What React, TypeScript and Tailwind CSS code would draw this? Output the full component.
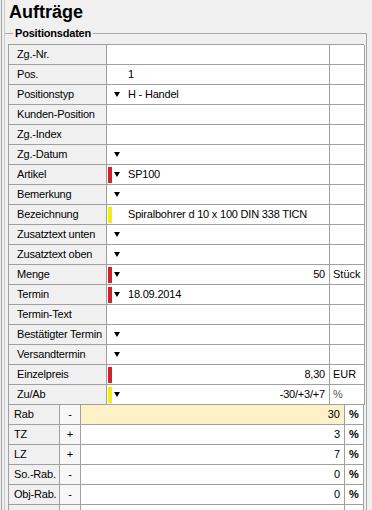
import React from "react";

type Row = {
  label: string;
  mark?: "red" | "yellow";
  arrow?: boolean;
  value?: string;
  num?: string;
  unit?: string;
};

const ROWS: Row[] = [
  { label: "Zg.-Nr." },
  { label: "Pos.", value: "1" },
  { label: "Positionstyp", arrow: true, value: "H - Handel" },
  { label: "Kunden-Position" },
  { label: "Zg.-Index" },
  { label: "Zg.-Datum", arrow: true },
  { label: "Artikel", mark: "red", arrow: true, value: "SP100" },
  { label: "Bemerkung", arrow: true },
  { label: "Bezeichnung", mark: "yellow", value: "Spiralbohrer d 10 x 100 DIN 338 TICN" },
  { label: "Zusatztext unten", arrow: true },
  { label: "Zusatztext oben", arrow: true },
  { label: "Menge", mark: "red", arrow: true, num: "50", unit: "Stück" },
  { label: "Termin", mark: "red", arrow: true, value: "18.09.2014" },
  { label: "Termin-Text" },
  { label: "Bestätigter Termin", arrow: true },
  { label: "Versandtermin", arrow: true },
  { label: "Einzelpreis", mark: "red", num: "8,30", unit: "EUR" },
  { label: "Zu/Ab", mark: "yellow", arrow: true, num: "-30/+3/+7", unit: "%" },
];

const DISCOUNTS = [
  { label: "Rab", sign: "-", value: "30", active: true },
  { label: "TZ", sign: "+", value: "3" },
  { label: "LZ", sign: "+", value: "7" },
  { label: "So.-Rab.", sign: "-", value: "0" },
  { label: "Obj-Rab.", sign: "-", value: "0" },
];

const Arrow = () => (
  <svg width="6" height="5" viewBox="0 0 6 5" className="block">
    <polygon points="0,0 6,0 3,5" fill="#000" />
  </svg>
);

const GridRow = ({ row }: { row: Row }) => (
  <div className="flex h-[20px]">
    <div className="w-[98px] shrink-0 border-r border-b border-[#a0a0a0] bg-[#f0f0f0] pl-[8px] flex items-center tracking-[-0.2px]">
      {row.label}
    </div>
    <div className="w-[223px] shrink-0 border-r border-b border-[#a0a0a0] bg-white flex items-center">
      <div className="w-[6px] shrink-0 pl-[1px] flex items-center">
        {row.mark && (
          <div
            className={
              row.mark === "red"
                ? "w-[4px] h-[16px] bg-[#d3202b]"
                : "w-[4px] h-[16px] bg-[#f3ee12]"
            }
          />
        )}
      </div>
      <div className="w-[15px] shrink-0 flex items-center pl-[1px]">{row.arrow && <Arrow />}</div>
      {row.value && <span className="tracking-[-0.2px] whitespace-nowrap">{row.value}</span>}
      {row.num && <span className="ml-auto pr-[4px] tracking-[-0.2px]">{row.num}</span>}
    </div>
    <div className="w-[35px] shrink-0 border-r border-b border-[#a0a0a0] bg-white flex items-center pl-[3px]">
      {row.unit && <span className={row.unit === "%" ? "text-[#555]" : ""}>{row.unit}</span>}
    </div>
  </div>
);

export default function App() {
  return (
    <div
      className="w-[372px] h-[510px] overflow-hidden bg-[#f0f0f0] text-[11px] text-black"
      style={{ fontFamily: '"Liberation Sans", Arial, sans-serif' }}
    >
      <div className="h-full ml-[1px] border-l border-[#a0a0a0]">
        <div className="h-full ml-[2px] border-l border-[#c8c8c8]">
          <div className="h-[28px] pl-[4px] pt-[2px] text-[18px] leading-[20px] font-bold">Aufträge</div>
          <div className="relative mt-[5px] w-[362px] h-[480px] border-t border-r border-[#a8a8a8]">
            <div className="absolute left-[8px] top-[-7px] px-[2px] bg-[#f0f0f0] font-bold leading-[13px] tracking-[-0.2px]">
              Positionsdaten
            </div>
            <div className="ml-[3px] mt-[10px] w-[356px] border-l border-t border-[#a0a0a0]">
              {ROWS.map((r) => (
                <GridRow key={r.label} row={r} />
              ))}
            </div>
            <div className="ml-[3px] w-[355px] border-l border-[#a0a0a0]">
              {DISCOUNTS.map((d) => (
                <div key={d.label} className="flex h-[20px]">
                  <div className="w-[51px] shrink-0 border-r border-b border-[#a0a0a0] bg-[#f0f0f0] pl-[5px] flex items-center tracking-[-0.2px]">
                    {d.label}
                  </div>
                  <div className="w-[21px] shrink-0 border-r border-b border-[#a0a0a0] bg-[#f7f7f7] flex items-center justify-center">
                    {d.sign}
                  </div>
                  <div
                    className={
                      d.active
                        ? "w-[264px] shrink-0 border-r border-b border-[#a0a0a0] bg-[#fdf1c8] flex items-center justify-end pr-[4px]"
                        : "w-[264px] shrink-0 border-r border-b border-[#a0a0a0] bg-white flex items-center justify-end pr-[4px]"
                    }
                  >
                    {d.value}
                  </div>
                  <div className="w-[19px] shrink-0 border-r border-b border-[#a0a0a0] bg-white flex items-center justify-center font-bold">
                    %
                  </div>
                </div>
              ))}
              <div className="flex h-[20px]">
                <div className="w-[51px] shrink-0 border-r border-[#a0a0a0] bg-[#f0f0f0]" />
                <div className="w-[21px] shrink-0 border-r border-[#a0a0a0] bg-[#f7f7f7]" />
                <div className="w-[264px] shrink-0 border-r border-[#a0a0a0] bg-white" />
                <div className="w-[19px] shrink-0 border-r border-[#a0a0a0] bg-white" />
              </div>
            </div>
          </div>
        </div>
      </div>
    </div>
  );
}
